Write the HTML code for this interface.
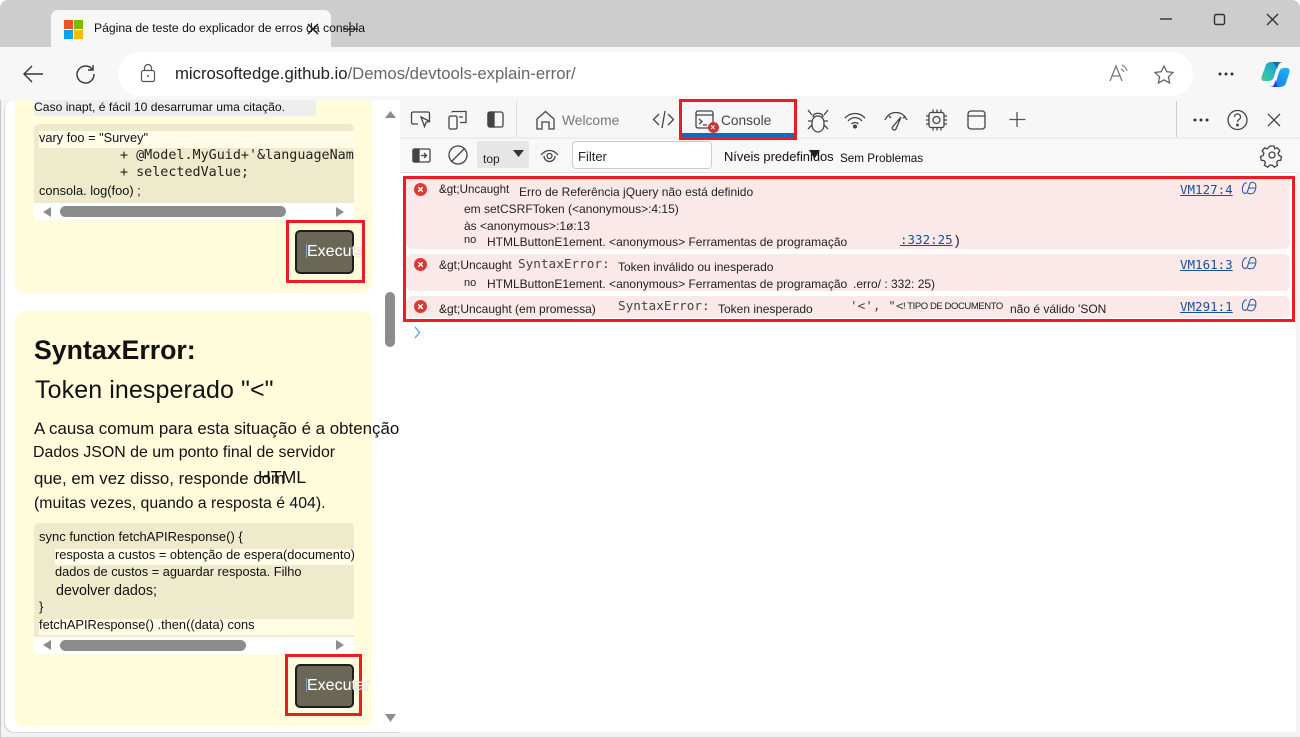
<!DOCTYPE html>
<html lang="pt"><head><meta charset="utf-8"><title>Página de teste do explicador de erros da consola</title>
<style>
html,body{margin:0;padding:0;width:1300px;height:738px;overflow:hidden;background:#fff}
body{position:relative;font-family:"Liberation Sans",sans-serif;color:#111}
div,span.t,a.t{position:absolute}
.t{white-space:nowrap;line-height:1;display:block}
.m{font-family:"DejaVu Sans Mono","Liberation Mono",monospace}
svg{position:absolute;overflow:visible;fill:none}
.l{color:#1a4f9c;text-decoration:underline;font-family:"DejaVu Sans Mono","Liberation Mono",monospace;font-size:12.500px}
.red{border:3px solid #ed1c24;box-sizing:border-box}
.row{background:#fbe9e9;left:406px;width:884px}
.tx{font-size:12px;color:#222}
.ic{stroke:#444;stroke-width:1.3}
.err{width:13px;height:13px;border-radius:50%;background:#dc3a35;left:414px}
.err:after{content:"";position:absolute;left:4px;top:4px;width:5px;height:5px;background:
linear-gradient(45deg,transparent 40%,#fff 40%,#fff 60%,transparent 60%),linear-gradient(-45deg,transparent 40%,#fff 40%,#fff 60%,transparent 60%)}
.ex{font-size:16px;color:#fff;text-shadow:0 0 1px #8d8a6c}
</style></head><body>

<!-- browser chrome -->
<div style="left:0;top:0;width:1300px;height:47px;background:#cdcdcd;border-radius:8px 8px 0 0"></div>
<div style="left:0;top:47px;width:1300px;height:53px;background:#f7f7f7"></div>
<div style="left:51px;top:10px;width:280px;height:37px;background:#f7f7f7;border-radius:7px 7px 0 0"></div>
<div style="left:64px;top:20px;width:9px;height:9px;background:#f25022"></div>
<div style="left:74px;top:20px;width:9px;height:9px;background:#7fba00"></div>
<div style="left:64px;top:30px;width:9px;height:9px;background:#00a4ef"></div>
<div style="left:74px;top:30px;width:9px;height:9px;background:#ffb900"></div>
<span class="t" style="left:94px;top:22px;font-size:12.200px;color:#111">Página de teste do explicador de erros da consola</span>
<svg style="left:0;top:0" width="1300" height="100">
<defs>
<linearGradient id="g1" x1="1" y1="0" x2="0" y2="1"><stop offset="0" stop-color="#1b8fd8"/><stop offset=".55" stop-color="#2ab5c0"/><stop offset="1" stop-color="#42cf8a"/></linearGradient>
<linearGradient id="g2" x1="1" y1="0" x2="0" y2="1"><stop offset="0" stop-color="#1fb4f2"/><stop offset="1" stop-color="#1a78ea"/></linearGradient>
</defs>
<path d="M308 24l10 10M318 24l-10 10" stroke="#222" stroke-width="1.4"/>
<path d="M350 22v14M343 29h15" stroke="#222" stroke-width="1.2"/>
<path d="M1160 19h12" stroke="#333" stroke-width="1.4"/>
<rect x="1214.500" y="14.500" width="10" height="10" rx="1.500" stroke="#333" stroke-width="1.400"/>
<path d="M1267 14l11 11M1278 14l-11 11" stroke="#333" stroke-width="1.400"/>
<path d="M43 74H25M32 66l-8 8 8 8" stroke="#333" stroke-width="1.400"/>
<path d="M92 69a8.500 8.500 0 1 0 2 5M93 65v5h-5" stroke="#333" stroke-width="1.400"/>
</svg>
<div style="left:118px;top:52px;width:1075px;height:44px;background:#fff;border-radius:22px"></div>
<svg style="left:0;top:0" width="1300" height="100">
<rect x="141.500" y="70.500" width="13" height="11" rx="2" stroke="#555" stroke-width="1.200"/>
<path d="M144.500 70v-2a3.500 3.500 0 0 1 7 0v2" stroke="#555" stroke-width="1.200"/>
<circle cx="148" cy="76" r="1" fill="#555"/>
<path d="M1110 81l6-15 6 15M1112.500 76h7" stroke="#777" stroke-width="1.300"/>
<path d="M1121 69a5 5 0 0 1 3 3M1122 65a9 9 0 0 1 5 6" stroke="#777" stroke-width="1.100"/>
<path d="M1164 66l2.700 5.700 6.300.8-4.600 4.300 1.200 6.200-5.600-3.100-5.600 3.100 1.200-6.200-4.600-4.300 6.300-.8z" stroke="#666" stroke-width="1.300"/>
<circle cx="1220" cy="74" r="1.500" fill="#333"/><circle cx="1226" cy="74" r="1.500" fill="#333"/><circle cx="1232" cy="74" r="1.500" fill="#333"/>
<path d="M1275 62h8c-3 0-5 2-6 5l-3 10c-1 3-3 4-6 4h-4c-2 0-3-2-2.500-4l4-11c1-3 3-4 6-4z" fill="url(#g1)"/>
<path d="M1275 62h8c-2 0-4 1-5 4l-1 3c-1-3-2-5-5-7z" fill="#1b6e8e"/>
<path d="M1279 87h-9c3 0 5-2 6-5l3-10c1-3 3-4 6-4h2c2 0 3 2 2.500 4l-3.500 11c-1 3-3 4-7 4z" fill="url(#g2)"/>
<path d="M1279 87h-9c3 0 4-2 5-5l1-2c0 3 1 6 3 7z" fill="#2347d4"/>
</svg>
<span class="t" style="left:175px;top:66px;font-size:16.700px;color:#222">microsoftedge.github.io<span style="color:#666">/Demos/devtools-explain-error/</span></span>

<!-- frame + left page -->
<div style="left:0;top:100px;width:1300px;height:638px;background:#f3f3f3"></div>
<div style="left:5px;top:100px;width:395px;height:632px;background:#fff;border-radius:10px 0 0 10px;box-shadow:-1px 1px 0 #d8d8d8"></div>
<div style="left:15px;top:100px;width:357px;height:193px;background:#fffcdc;border-radius:0 0 10px 10px"></div>
<div style="left:34px;top:100px;width:282px;height:16px;background:#eeeeee"></div>
<span class="t" style="left:34px;top:101px;font-size:12.150px;color:#111">Caso inapt, é fácil 10 desarrumar uma citação.</span>
<div style="left:34px;top:124px;width:320px;height:79px;background:#eeebcc;border-radius:5px 5px 0 0;overflow:hidden">
  <div style="left:5px;top:7px;width:315px;height:17px;background:#fffde8"></div>
  <span class="t" style="left:5px;top:8px;font-size:12.800px;color:#111">vary foo = "Survey"</span>
  <span class="t m" style="left:86px;top:25px;font-size:13.400px;color:#222">+ @Model.MyGuid+'&amp;languageName=</span>
  <span class="t m" style="left:86px;top:42px;font-size:13.400px;color:#222">+ selectedValue;</span>
  <span class="t" style="left:5px;top:61px;font-size:12.800px;color:#111">consola. log(foo) ;</span>
</div>
<div style="left:34px;top:203px;width:320px;height:17px;background:#fff"></div>
<div style="left:60px;top:206px;width:226px;height:11px;background:#8c8c8c;border-radius:6px"></div>
<div style="left:385px;top:292px;width:10px;height:55px;background:#8c8c8c;border-radius:5px"></div>
<div style="left:295px;top:230px;width:59px;height:44px;box-sizing:border-box;background:#6b6757;border:2px solid #1d1d1d;border-radius:5px"></div>
<div style="left:306px;top:244px;width:1px;height:14px;background:#8a9cc8"></div>
<div style="left:307px;top:240px;width:58px;height:24px;overflow:hidden"><span class="t ex" style="left:0;top:4px">Executar</span></div>
<div class="red" style="left:286px;top:220px;width:79px;height:63px"></div>

<div style="left:15px;top:311px;width:357px;height:416px;background:#fffcdc;border-radius:10px"></div>
<span class="t" style="left:34px;top:337px;font-size:26.700px;font-weight:bold;color:#111">SyntaxError:</span>
<span class="t" style="left:35px;top:378px;font-size:25px;color:#111;letter-spacing:.1px">Token inesperado "&lt;"</span>
<span class="t" style="left:34px;top:421px;font-size:16.900px;color:#111">A causa comum para esta situação é a obtenção</span>
<span class="t" style="left:33px;top:445px;font-size:15.900px;color:#111">Dados JSON de um ponto final de servidor</span>
<span class="t" style="left:34px;top:471px;font-size:16.800px;color:#111">que, em vez disso, responde com</span>
<span class="t" style="left:258px;top:469px;font-size:17.700px;color:#111">HTML</span>
<span class="t" style="left:34px;top:496px;font-size:15.850px;color:#111">(muitas vezes, quando a resposta é 404).</span>
<div style="left:34px;top:523px;width:320px;height:114px;background:#eeebcc;border-radius:5px 5px 0 0">
  <div style="left:21px;top:26px;width:299px;height:16px;background:#fffde8"></div>
  <div style="left:5px;top:96px;width:315px;height:16px;background:#fffde8"></div>
  <span class="t" style="left:5px;top:7px;font-size:13px;color:#111">sync function fetchAPIResponse() {</span>
  <span class="t" style="left:21px;top:26px;font-size:12.800px;color:#111">resposta a custos = obtenção de espera(documento)</span>
  <span class="t" style="left:21px;top:43px;font-size:12.800px;color:#111">dados de custos = aguardar resposta. Filho</span>
  <span class="t" style="left:22px;top:61px;font-size:14.300px;color:#111">devolver dados;</span>
  <span class="t" style="left:5px;top:77px;font-size:13px;color:#111">}</span>
  <span class="t" style="left:5px;top:96px;font-size:12.850px;color:#111">fetchAPIResponse() .then((data) cons</span>
</div>
<div style="left:34px;top:637px;width:320px;height:17px;background:#fff"></div>
<div style="left:60px;top:640px;width:186px;height:11px;background:#8c8c8c;border-radius:6px"></div>
<svg style="left:0;top:0" width="400" height="738">
<path d="M51 207v10l-8-5z" fill="#8c8c8c"/><path d="M336 207v10l8-5z" fill="#8c8c8c"/>
<path d="M51 640v10l-8-5z" fill="#8c8c8c"/><path d="M336 640v10l8-5z" fill="#8c8c8c"/>
<path d="M385 118l5.500-7 5.500 7z" fill="#8c8c8c"/><path d="M385 714l5.500 8 5.500-8z" fill="#8c8c8c"/>
</svg>
<div style="left:295px;top:664px;width:59px;height:44px;box-sizing:border-box;background:#6b6757;border:2px solid #1d1d1d;border-radius:5px"></div>
<div style="left:306px;top:678px;width:1px;height:14px;background:#8a9cc8"></div>
<div class="red" style="left:285px;top:654px;width:77px;height:62px"></div>
<span class="t ex" style="left:307px;top:678px">Executar</span>

<!-- devtools -->
<div style="left:400px;top:100px;width:896px;height:632px;background:#fff"></div>
<div style="left:400px;top:100px;width:900px;height:37px;background:#f7f7f7"></div>
<div style="left:400px;top:137px;width:900px;height:35px;background:#f8f8f8;border-top:2px solid #ececec;box-sizing:border-box"></div>
<div style="left:400px;top:172px;width:896px;height:1px;background:#d6e2f4"></div>
<div style="left:516px;top:101px;width:1px;height:36px;background:#ddd"></div>
<div style="left:1176px;top:101px;width:1px;height:36px;background:#ccc"></div>

<svg style="left:0;top:0" width="1300" height="340" class="ic">
<path d="M418 124h-5a1.500 1.500 0 0 1-1.500-1.500v-9a1.500 1.500 0 0 1 1.500-1.500h15a1.500 1.500 0 0 1 1.500 1.500v9"/>
<path d="M421 117l8 4-3 1.500-1.500 4z"/>
<rect x="449" y="116" width="8" height="13" rx="1.500"/><path d="M452 112.500a1 1 0 0 1 1-1h13v11h-6M459 117h4"/>
<rect x="488" y="112" width="15" height="15" rx="2"/><path d="M488 114a2 2 0 0 1 2-2h4v15h-4a2 2 0 0 1-2-2z" fill="#444"/>
<path d="M537 129v-10l8.500-7.500 8.500 7.500v10h-5v-7h-7v7z"/>
<path d="M659 114l-5.500 5.500 5.500 5.500M668 114l5.500 5.500-5.500 5.500M665 111l-3 17"/>
<rect x="696" y="111" width="17" height="17" rx="2"/><path d="M696 115h17M699 119l3 2.500-3 2.500M703 125h4"/>
<path d="M818 116c-4 0-6 3-6 7v2c0 4 3 7 6 7s6-3 6-7v-2c0-4-2-7-6-7zM813 117c0-5 10-5 10 0M808 110l4 5M828 110l-4 5M808 121h4M828 121h-4M808 129l4-4M828 129l-4-4"/>
<path d="M845 118c5.500-6 14.500-6 20 0M848 121c4-4.500 10-4.500 14 0M851.500 124c2-2 5-2 7 0"/><circle cx="855" cy="126.500" r="1.400" fill="#444"/>
<path d="M885 120c3-6 7-7.500 11-7.500s8 1.500 11 7.500M901 117l-5 12a2 2 0 0 1-3.500-2l8.500-10zM889 116l2 2M905 117l-2 1"/>
<rect x="929" y="112.500" width="15" height="15" rx="2"/><circle cx="936.500" cy="120" r="3.500"/><path d="M933 109.500v3M937 109.500v3M941 109.500v3M933 127.500v3M937 127.500v3M941 127.500v3M926 116h3M926 120h3M926 124h3M944 116h3M944 120h3M944 124h3"/>
<rect x="968" y="111" width="17" height="18" rx="3"/><path d="M968 116h17"/>
<path d="M1017 112v15M1009.500 119.500h16" stroke="#555"/>
<circle cx="1195" cy="120" r="1.500" fill="#333" stroke="none"/><circle cx="1201" cy="120" r="1.500" fill="#333" stroke="none"/><circle cx="1207" cy="120" r="1.500" fill="#333" stroke="none"/>
<circle cx="1237.500" cy="120" r="9.500"/><path d="M1234.500 117a3 3 0 1 1 4.500 2.500c-1 .7-1.500 1.200-1.500 2.500"/><circle cx="1237.500" cy="125" r=".8" fill="#444"/>
<path d="M1268 114l12 12M1280 114l-12 12"/>
<rect x="413" y="149" width="17" height="13" rx="1.500"/><path d="M413 150.500a1.500 1.500 0 0 1 1.500-1.500h4.500v13h-4.500a1.500 1.500 0 0 1-1.500-1.500z" fill="#444"/><path d="M421 155.500h5M424 153l2.500 2.500-2.500 2.500"/>
<circle cx="458" cy="155" r="9"/><path d="M451.500 161.500l13-13"/>
<path d="M541 155c5-6 12-6 17 0M544 156a5.500 5.500 0 0 0 11 0"/><circle cx="549.500" cy="156" r="2.500"/>
<g transform="translate(1272 155)"><path d="M-2-9h4l.8 2.800 2.500-1 2.500 3-1.700 2.400.8 2.300 2.600 1-.8 3.800-2.800.3-1.300 2 1 2.600-3.300 2-2-2h-2.600l-2 2-3.300-2 1-2.600-1.300-2-2.800-.3-.8-3.800 2.600-1 .8-2.300-1.700-2.400 2.500-3 2.500 1z"/><circle r="3"/></g>
<path d="M415 327l4.500 5.500-4.500 5.500" stroke="#5b9bf0"/>
</svg>
<span class="t" style="left:562px;top:114px;font-size:13.800px;color:#777">Welcome</span>
<span class="t" style="left:721px;top:114px;font-size:13.700px;color:#444">Console</span>
<div style="left:682px;top:133px;width:112px;height:4px;background:#0f6cbd"></div>
<div class="red" style="left:679px;top:99px;width:118px;height:41px"></div>
<div style="left:708px;top:122px;width:11px;height:11px;border-radius:50%;background:#d13438"></div>
<span class="t" style="left:710.500px;top:124px;font-size:8px;font-weight:bold;color:#fff">×</span>

<div style="left:477px;top:141px;width:52px;height:27px;background:#e6e6e6;border-radius:2px"></div>
<span class="t" style="left:483px;top:153px;font-size:12px;color:#222">top</span>
<svg style="left:0;top:0" width="900" height="170"><path d="M513 150h11l-5.500 7z" fill="#333"/></svg>
<div style="left:572px;top:141px;width:140px;height:28px;box-sizing:border-box;background:#fff;border:1px solid #ccc;border-radius:4px"></div>
<span class="t" style="left:578px;top:150px;font-size:13px;color:#222">Filter</span>
<span class="t" style="left:724px;top:151px;font-size:12.900px;color:#111">Níveis predefinidos</span>
<svg style="left:0;top:0" width="900" height="170"><path d="M809 150h11l-5 8h-1z" fill="#222"/></svg>
<span class="t" style="left:840px;top:153px;font-size:11.700px;color:#111">Sem Problemas</span>

<!-- console rows -->
<div class="row" style="top:179px;height:70px;border-radius:0 0 6px 6px"></div>
<div class="row" style="top:254px;height:37px;border-radius:6px"></div>
<div class="row" style="top:296px;height:22px;border-radius:6px"></div>
<div class="err" style="top:183px"></div>
<div class="err" style="top:258px"></div>
<div class="err" style="top:300px"></div>

<span class="t tx" style="left:439px;top:184px;font-size:11.600px">&amp;gt;Uncaught</span>
<span class="t tx" style="left:519px;top:186px">Erro de Referência jQuery não está definido</span>
<span class="t tx" style="left:464px;top:203px">em setCSRFToken (&lt;anonymous&gt;:4:15)</span>
<span class="t tx" style="left:464px;top:220px">às &lt;anonymous&gt;:1ø:13</span>
<span class="t tx" style="left:464px;top:235px;font-size:11px">no</span>
<span class="t tx" style="left:487px;top:236px">HTMLButtonE1ement. &lt;anonymous&gt; Ferramentas de programação</span>
<a class="t l" style="left:900px;top:234px">:332:25</a><span class="t tx" style="left:955px;top:233px;font-size:14px">)</span>

<span class="t tx" style="left:439px;top:259px">&amp;gt;Uncaught</span>
<span class="t m" style="left:518px;top:258px;font-size:12.700px;color:#444">SyntaxError:</span>
<span class="t tx" style="left:618px;top:261px">Token inválido ou inesperado</span>
<span class="t tx" style="left:464px;top:278px;font-size:11px">no</span>
<span class="t tx" style="left:487px;top:278px">HTMLButtonE1ement. &lt;anonymous&gt; Ferramentas de programação</span>
<span class="t tx" style="left:853px;top:278px">.erro/ : 332: 25)</span>

<span class="t tx" style="left:439px;top:303px">&amp;gt;Uncaught (em promessa)</span>
<span class="t m" style="left:618px;top:300px;font-size:12.700px;color:#444">SyntaxError:</span>
<span class="t tx" style="left:718px;top:303px">Token inesperado</span>
<span class="t m" style="left:850px;top:300px;font-size:12.700px;color:#444">'&lt;', "&lt;</span>
<span class="t tx" style="left:903px;top:302px;font-size:9.500px;letter-spacing:-.42px">! TIPO DE DOCUMENTO</span>
<span class="t tx" style="left:1010px;top:303px">não é válido 'SON</span>

<a class="t l" style="left:1180px;top:184px">VM127:4</a>
<a class="t l" style="left:1180px;top:259px">VM161:3</a>
<a class="t l" style="left:1180px;top:301px">VM291:1</a>
<svg style="left:0;top:0" width="1300" height="320" stroke="#2a5ca8" stroke-width="1.100">
<g transform="translate(1242 182)"><path d="M5 1H3C1 3 0 6 .5 9c.5 2 2 3 4 2 2-2 2-7 4-10C9 0 12 0 13.500 2c1 3 0 7-2 9-1 1-4 1-6 0M6 6h7"/></g>
<g transform="translate(1242 257)"><path d="M5 1H3C1 3 0 6 .5 9c.5 2 2 3 4 2 2-2 2-7 4-10C9 0 12 0 13.500 2c1 3 0 7-2 9-1 1-4 1-6 0M6 6h7"/></g>
<g transform="translate(1242 299)"><path d="M5 1H3C1 3 0 6 .5 9c.5 2 2 3 4 2 2-2 2-7 4-10C9 0 12 0 13.500 2c1 3 0 7-2 9-1 1-4 1-6 0M6 6h7"/></g>
</svg>
<div class="red" style="left:403px;top:176px;width:892px;height:146px"></div>

<!-- window edge -->
<div style="left:0;top:737px;width:1300px;height:1px;background:#c8c8c8"></div>
<div style="left:0;top:100px;width:1px;height:638px;background:#c8c8c8"></div>
</body></html>
